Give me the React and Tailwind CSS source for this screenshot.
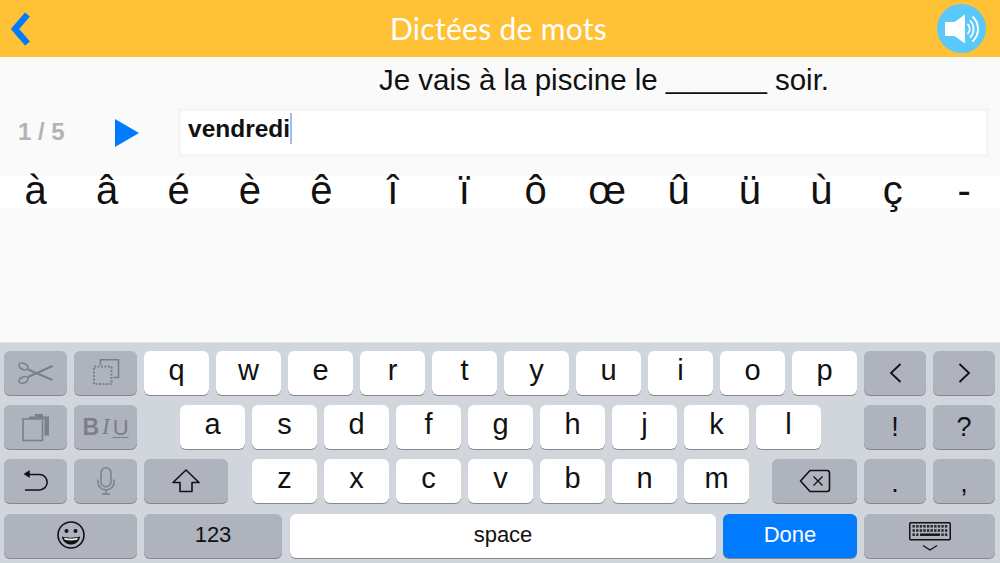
import React from "react";

const SANS = "font-['Liberation_Sans',Arial,sans-serif]";
const ACCENTS = ["à", "â", "é", "è", "ê", "î", "ï", "ô", "œ", "û", "ü", "ù", "ç", "-"];

function Key({ children, dark, w = "w-[65px]", className = "" }) {
  return (
    <div
      className={`h-[44px] ${w} shrink-0 rounded-[6px] flex items-center justify-center text-[#111] shadow-[0_1px_0_#85878d] ${
        dark ? "bg-[#aeb3be]" : "bg-white"
      } ${className}`}
    >
      {children}
    </div>
  );
}

const Letter = ({ c }) => <Key><span className="text-[29px] leading-none -mt-[5px]">{c}</span></Key>;

function Sym({ c, className = "" }) {
  return <span className={`text-[27px] leading-none ${className}`}>{c}</span>;
}

/* dark key pairs at the far right of each row */
function RightPair({ a, b }) {
  return (
    <div className="ml-auto flex gap-[7px]">
      <Key dark w="w-[62px]">{a}</Key>
      <Key dark w="w-[62px]">{b}</Key>
    </div>
  );
}

function ScissorsIcon() {
  return (
    <svg width="36" height="26" viewBox="0 0 36 26" fill="none" stroke="#7b7f89" strokeWidth="1.5">
      <ellipse cx="5.500" cy="6.500" rx="4.800" ry="3" transform="rotate(25 5.500 6.500)" />
      <ellipse cx="5.500" cy="20" rx="4.800" ry="3" transform="rotate(-25 5.500 20)" />
      <path d="M10 9.500L34.500 20" strokeWidth="2" />
      <path d="M10 17L34.500 6" strokeWidth="2" />
    </svg>
  );
}

function CopyIcon() {
  return (
    <svg width="28" height="28" viewBox="0 0 28 28" fill="none" stroke="#7b7f89" strokeWidth="1.600">
      <path d="M8.500 6V0.800H26.500V18.500H21.500" />
      <rect x="2" y="7.500" width="17.500" height="17.500" strokeWidth="2" strokeDasharray="2 1.500" />
    </svg>
  );
}

function PasteIcon() {
  return (
    <svg width="27" height="29" viewBox="0 0 27 29" fill="none">
      <path d="M7 5.500V3.500H13V1H21V3.500H27V22.500H22.500V5.500Z" fill="#7b7f89" />
      <rect x="1" y="6" width="19.500" height="21.500" stroke="#7b7f89" strokeWidth="1.600" />
    </svg>
  );
}

function UndoIcon() {
  return (
    <svg width="25" height="22" viewBox="0 0 25 22" fill="none" stroke="#111" strokeWidth="1.500">
      <path d="M6 4.500H16.500a7.700 7.700 0 0 1 0 15.400H2" />
      <path d="M1 4L6.500 0.500V7.500Z" fill="#111" strokeWidth="0.500" />
    </svg>
  );
}

function MicIcon() {
  return (
    <svg width="18" height="28" viewBox="0 0 18 28" fill="none" stroke="#7b7f89" strokeWidth="1.500">
      <rect x="4" y="0.800" width="10" height="19" rx="5" />
      <path d="M1 12.500v3a8 7.500 0 0 0 16 0v-3M9 23V27M5 27h8" />
    </svg>
  );
}

function ShiftIcon() {
  return (
    <svg width="28" height="24" viewBox="0 0 28 24" fill="none" stroke="#111" strokeWidth="1.600" strokeLinejoin="round">
      <path d="M14 1L27 13.500H20V22.500H8V13.500H1Z" />
    </svg>
  );
}

function DeleteIcon() {
  return (
    <svg width="32" height="24" viewBox="0 0 32 24" fill="none" stroke="#111" strokeWidth="1.600" strokeLinejoin="round">
      <path d="M11 1.500H28a2.500 2.500 0 0 1 2.500 2.500V20a2.500 2.500 0 0 1-2.500 2.500H11L1.500 12Z" />
      <path d="M14.500 7.500L23.500 16.500M23.500 7.500L14.500 16.500" strokeWidth="1.300" />
    </svg>
  );
}

function EmojiIcon() {
  return (
    <svg width="28" height="28" viewBox="0 0 28 28" fill="none" className="-mt-[2px]">
      <circle cx="14" cy="14" r="13" stroke="#111" strokeWidth="1.600" />
      <circle cx="9.500" cy="10" r="2" fill="#111" />
      <circle cx="18.500" cy="10" r="2" fill="#111" />
      <path d="M5 15.500C9 17 19 17 23 15.500C22.500 21 18 23.500 14 23.500C10 23.500 5.500 21 5 15.500Z" fill="#111" />
      <path d="M7 16.800C11 17.700 17 17.700 21 16.800L20.300 18.800C16 19.600 12 19.600 7.700 18.800Z" fill="#e8e9ec" />
    </svg>
  );
}

function KeyboardIcon() {
  const cells = [];
  for (let r = 0; r < 3; r++) {
    for (let c = 0; c < 10; c++) {
      if (r === 2 && c > 1 && c < 8) continue;
      cells.push(<rect key={`${r}-${c}`} x={3.500 + c * 3.600} y={5 + r * 4.200} width="2.400" height="2.600" fill="#2a2a2e" />);
    }
  }
  return (
    <svg width="42" height="32" viewBox="0 0 42 32" fill="none">
      <rect x="0.750" y="2.750" width="40.500" height="17" rx="1" stroke="#111" strokeWidth="1.500" />
      {cells}
      <rect x="11" y="13.500" width="20" height="2.400" fill="#111" />
      <path d="M14 25.500L21 30L28 25.500" stroke="#111" strokeWidth="1.300" />
    </svg>
  );
}

function SpeakerIcon() {
  return (
    <svg width="34" height="30" viewBox="0 0 34 30" fill="none">
      <path d="M0 8H9.500L20 0.500V29.500L9.500 22H0Z" fill="white" />
      <path d="M23 10.500a7 7 0 0 1 0 9M25.500 7a12 12 0 0 1 0 16M28 3a17 17 0 0 1 0 24" stroke="white" strokeWidth="1.800" strokeLinecap="round" />
    </svg>
  );
}

function Keyboard() {
  return (
    <div className={`h-[221px] shrink-0 bg-[#d1d5dc] border-t border-[#e3e4e6] pt-[8px] pl-[4px] pr-[5px] flex flex-col gap-[10px] ${SANS}`}>
      <div className="flex gap-[7px]">
        <Key dark w="w-[63px]"><ScissorsIcon /></Key>
        <Key dark w="w-[63px]"><CopyIcon /></Key>
        {["q", "w", "e", "r", "t", "y", "u", "i", "o", "p"].map((c) => <Letter key={c} c={c} />)}
        <RightPair
          a={<svg width="13" height="20" viewBox="0 0 13 20" fill="none" stroke="#111" strokeWidth="1.800"><path d="M11.500 1L2 10L11.500 19" /></svg>}
          b={<svg width="13" height="20" viewBox="0 0 13 20" fill="none" stroke="#111" strokeWidth="1.800"><path d="M1.500 1L11 10L1.500 19" /></svg>}
        />
      </div>
      <div className="flex gap-[7px]">
        <Key dark w="w-[63px]"><PasteIcon /></Key>
        <Key dark w="w-[63px]" className="gap-[3px]">
          <span className="text-[23px] font-bold text-[#7b7f89]">B</span>
          <span className="text-[23px] italic font-['Liberation_Serif',serif] text-[#7b7f89]">I</span>
          <span className="text-[22px] underline underline-offset-2 decoration-1 text-[#7b7f89]">U</span>
        </Key>
        <div className="ml-[36px] flex gap-[7px]">
          {["a", "s", "d", "f", "g", "h", "j", "k", "l"].map((c) => <Letter key={c} c={c} />)}
        </div>
        <RightPair a={<Sym c="!" />} b={<Sym c="?" />} />
      </div>
      <div className="flex gap-[7px]">
        <Key dark w="w-[63px]"><UndoIcon /></Key>
        <Key dark w="w-[63px]"><MicIcon /></Key>
        <Key dark w="w-[84px]"><ShiftIcon /></Key>
        <div className="ml-[17px] flex gap-[7px]">
          {["z", "x", "c", "v", "b", "n", "m"].map((c) => <Letter key={c} c={c} />)}
        </div>
        <Key dark w="w-[85px]" className="ml-[16px]"><DeleteIcon /></Key>
        <RightPair a={<Sym c="." className="mt-[5px]" />} b={<Sym c="," className="mt-[5px]" />} />
      </div>
      <div className="flex gap-[7px] mt-px">
        <Key dark w="w-[133px]"><EmojiIcon /></Key>
        <Key dark w="w-[138px]"><span className="text-[22px] -mt-[3px]">123</span></Key>
        <Key w="w-[426px]" className="ml-px"><span className="text-[22px] -mt-[3px]">space</span></Key>
        <Key w="w-[134px]" className="!bg-[#007aff] !text-white"><span className="text-[22px] -mt-[4px]">Done</span></Key>
        <Key dark w="w-[131px]" className="ml-auto"><KeyboardIcon /></Key>
      </div>
    </div>
  );
}

export default function App() {
  return (
    <div className={`w-[1000px] h-[563px] overflow-hidden flex flex-col bg-[#fafafa] ${SANS}`}>
      <header className="h-[57px] shrink-0 bg-[#ffc136] flex items-center pl-[11px] pr-[14px]">
        <div className="w-[49px] shrink-0">
          <svg width="19" height="34" viewBox="0 0 19 34" fill="none" stroke="#007aff" strokeWidth="6.500">
            <path d="M16.500 2.500L4 17L16.500 31.500" />
          </svg>
        </div>
        <h1 className="flex-1 text-center text-white text-[30px] font-['Lato',sans-serif] tracking-[0.3px]">Dictées de mots</h1>
        <div className="w-[49px] h-[49px] shrink-0 rounded-full bg-[#5ac8fa] flex items-center justify-center">
          <SpeakerIcon />
        </div>
      </header>

      <main className="flex-1 min-h-0">
        <p className="h-[46px] pl-[208px] flex items-center justify-center gap-[8px] text-[29.500px] text-[#111]">
          <span>Je vais à la piscine le</span>
          <span className="text-[26px]">_______</span>
          <span>soir.</span>
        </p>
        <div className="mt-[5px] pr-[11px] flex items-center">
          <span className="w-[115px] pl-[18px] text-[24px] font-bold text-[#b3b3b3] -mt-[2px]">1 / 5</span>
          <svg width="24" height="28" viewBox="0 0 24 28" className="shrink-0">
            <path d="M0 0L24 14L0 28Z" fill="#007aff" />
          </svg>
          <div className="ml-[39px] flex-1 h-[49px] bg-white border-[3px] border-[#f5f5f5] pl-[7px] flex items-start">
            <span className="text-[24.500px] font-bold text-[#111] leading-none mt-[6px]">vendredi</span>
            <span className="w-[2px] h-[31px] mt-[2px] bg-[#a3b8f5]" />
          </div>
        </div>
        <div className="mt-[19px] h-[32px] bg-white grid grid-cols-14">
          {ACCENTS.map((c) => (
            <span key={c} className="text-center text-[40px] leading-[32px] text-[#111] -mt-[2px]">{c}</span>
          ))}
        </div>
      </main>

      <Keyboard />
    </div>
  );
}
